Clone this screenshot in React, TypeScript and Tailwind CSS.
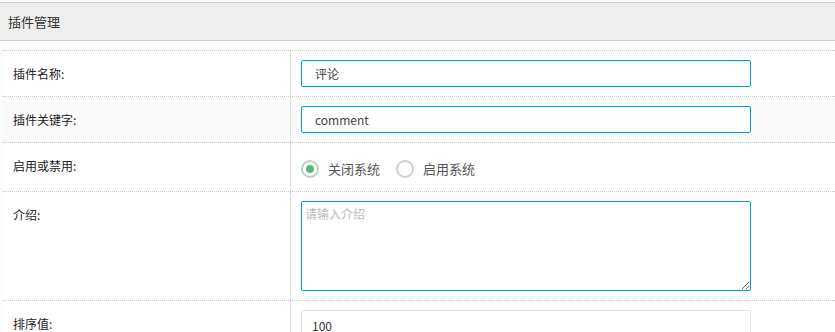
import { useState } from 'react'

const font = { fontFamily: '"Noto Sans CJK SC", "Liberation Sans", sans-serif' }

function Row({
  label,
  children,
  className = '',
}: {
  label: string
  children: React.ReactNode
  className?: string
}) {
  return (
    <div className={`flex border-b border-dotted border-[#c8c8c8] ${className}`}>
      <div className="w-[288px] shrink-0 border-r border-dotted border-[#c8c8c8] pl-[10px] pt-[14px] text-[12px] leading-[18px] text-[#222]">
        {label}
      </div>
      <div className="flex-1 pb-[10px] pl-[10px] pt-[9px]">{children}</div>
    </div>
  )
}

export default function App() {
  const [enabled, setEnabled] = useState(false)

  return (
    <div className="h-[332px] w-[835px] overflow-hidden bg-[#fcfcfc]" style={font}>
      <div className="mt-[2px] flex h-[39px] items-center border-y border-[#cfcfcf] bg-[#eeeeee] pl-[8px] text-[13px] text-[#333]">
        插件管理
      </div>
      <div className="ml-[3px] mt-[9px] border-t border-dotted border-[#c8c8c8]">
        <Row label="插件名称:" className="h-[46px] bg-white">
          <input
            defaultValue="评论"
            className="h-[27px] w-[450px] rounded-[2px] border border-[#009fc7] bg-white pl-[13px] text-[12px] text-[#444] outline-none"
          />
        </Row>
        <Row label="插件关键字:" className="h-[46px] bg-[#fafafa]">
          <input
            defaultValue="comment"
            className="h-[27px] w-[450px] rounded-[2px] border border-[#009fc7] bg-white pl-[13px] text-[12px] text-[#444] outline-none"
          />
        </Row>
        <Row label="启用或禁用:" className="h-[49px] bg-white">
          <div className="flex items-center pt-[7px] text-[13px] text-[#555]">
            <button onClick={() => setEnabled(false)} className="flex items-center">
              <span className="flex h-[18px] w-[18px] items-center justify-center rounded-full border-2 border-[#b9d4bd]">
                {!enabled && <span className="h-[8px] w-[8px] rounded-full bg-[#5ab97a]" />}
              </span>
              <span className="ml-[9px]">关闭系统</span>
            </button>
            <button onClick={() => setEnabled(true)} className="ml-[16px] flex items-center">
              <span className="flex h-[18px] w-[18px] items-center justify-center rounded-full border-2 border-[#d0d0d0]">
                {enabled && <span className="h-[8px] w-[8px] rounded-full bg-[#5ab97a]" />}
              </span>
              <span className="ml-[9px]">启用系统</span>
            </button>
          </div>
        </Row>
        <Row label="介绍:" className="h-[109px] bg-white">
          <textarea
            placeholder="请输入介绍"
            className="block h-[90px] w-[450px] rounded-[2px] border border-[#009fc7] bg-white px-[3px] py-[3px] text-[12px] text-[#444] outline-none placeholder:text-[#bbb]"
          />
        </Row>
        <Row label="排序值:" className="h-[60px] bg-white">
          <input
            defaultValue="100"
            className="h-[27px] w-[450px] rounded-[2px] border border-[#e3e3e3] bg-white pl-[10px] pt-[4px] text-[12px] text-[#333] outline-none"
          />
        </Row>
      </div>
    </div>
  )
}
